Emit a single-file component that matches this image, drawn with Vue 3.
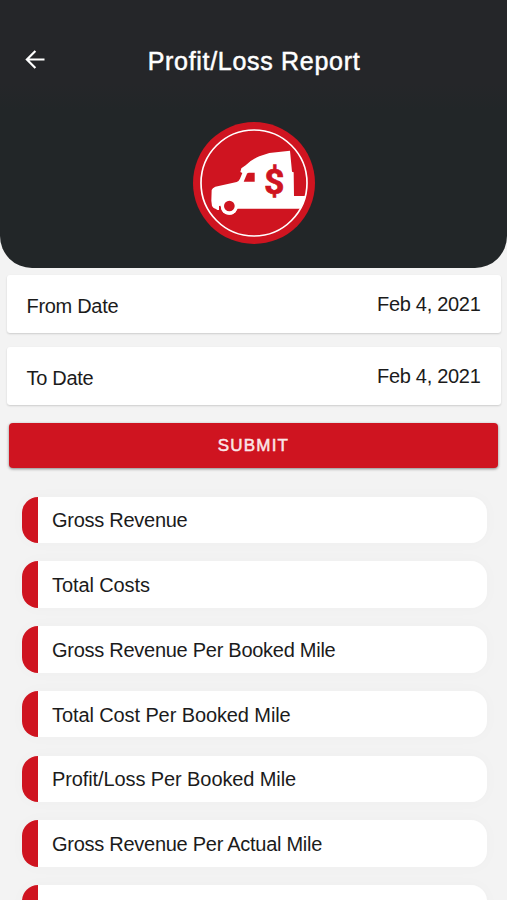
<template>
  <div class="page">
    <header class="hero">
      <div class="toolbar">
        <button class="back" aria-label="Back">
          <svg viewBox="0 0 20 20" width="20" height="20" fill="none" stroke="currentColor" stroke-width="2.2">
            <path d="M19.5 9.5H1.9M10.4 1L1.9 9.5l8.5 8.5"/>
          </svg>
        </button>
        <h1 class="title">Profit/Loss Report</h1>
      </div>
      <svg class="logo" viewBox="39 36 366 366">
        <circle cx="222" cy="219" r="183" fill="#cf1420"/>
        <circle cx="222" cy="219" r="159" fill="none" stroke="#fff" stroke-width="5"/>
        <path fill="#fff" d="M95 240Q97 234 106 230L170 216Q177 213 180 206L187 189L181 186L184 175L197 166Q215 148 238 139L268 129L330 122L336 185L341 187L342 258H377Q372 277 362 296H172Q164 314 148 314Q132 314 125 301L122 287L117 288V300H112L108 297Q100 296 96 288L94 272Z"/>
        <path fill="#cf1420" d="M201 191Q203 188 207 188H224V215H191Z"/>
        <circle cx="148" cy="288" r="26" fill="#fff"/>
        <circle cx="148" cy="288" r="16" fill="#cf1420"/>
        <text class="dollar" x="283" y="251" text-anchor="middle">$</text>
      </svg>
    </header>

    <div class="filters">
      <div class="date-row" v-for="d in dates" :key="d.label">
        <span class="date-label">{{ d.label }}</span>
        <span class="date-value">{{ d.value }}</span>
      </div>
      <button class="submit">SUBMIT</button>
    </div>

    <ul class="report">
      <li
        class="report-item"
        v-for="(item, i) in items"
        :key="i"
        :class="{ tight: item.startsWith('Gross') }"
      >{{ item }}</li>
    </ul>
  </div>
</template>

<script setup>
const dates = [
  { label: 'From Date', value: 'Feb 4, 2021' },
  { label: 'To Date', value: 'Feb 4, 2021' }
]

const items = [
  'Gross Revenue',
  'Total Costs',
  'Gross Revenue Per Booked Mile',
  'Total Cost Per Booked Mile',
  'Profit/Loss Per Booked Mile',
  'Gross Revenue Per Actual Mile',
  ''
]
</script>

<style>
body {
  margin: 0;
  background: #f3f3f3;
}
</style>

<style scoped>
.page {
  height: 900px;
  overflow: hidden;
  background: #f3f3f3;
  color: #1b1b1b;
  font-family: "Liberation Sans", Arial, sans-serif;
}

.hero {
  height: 268px;
  display: flex;
  flex-direction: column;
  align-items: center;
  background: linear-gradient(#252629 84px, #222628 110px);
  border-radius: 0 0 32px 32px;
}

.toolbar {
  width: 100%;
  height: 122px;
  box-sizing: border-box;
  padding: 0 25px;
  display: grid;
  grid-template-columns: 20px 1fr 20px;
  align-items: center;
}

.back {
  display: flex;
  padding: 0;
  border: 0;
  background: none;
  color: #fff;
  cursor: pointer;
}

.back svg {
  margin-top: -2px;
}

.title {
  margin: 0;
  padding-left: 1px;
  text-align: center;
  color: #fff;
  font-size: 25px;
  font-weight: 400;
  letter-spacing: 0.7px;
  -webkit-text-stroke: 0.5px #fff;
}

.logo {
  width: 122px;
  height: 122px;
}

.dollar {
  fill: #cf1420;
  stroke: #cf1420;
  stroke-width: 2px;
  font-family: Roboto, sans-serif;
  font-size: 107px;
  font-weight: 700;
}

.filters {
  padding: 7px 6px 0 7px;
}

.date-row {
  height: 58px;
  margin-bottom: 14px;
  padding: 0 20.5px 0 19.5px;
  display: flex;
  align-items: center;
  justify-content: space-between;
  background: #fff;
  border-radius: 3px;
  box-shadow: 0 1px 2px rgba(0, 0, 0, 0.16);
  font-size: 20px;
  letter-spacing: -0.3px;
}

.date-label {
  padding-top: 4px;
}

.submit {
  display: block;
  width: calc(100% - 5px);
  height: 44.5px;
  margin: 18px 3px 0 2px;
  padding: 1px 0 0;
  border: 0;
  border-radius: 4px;
  background: #cf1420;
  color: #fbe6e7;
  font-family: "Liberation Sans", Arial, sans-serif;
  font-size: 17px;
  font-weight: 400;
  letter-spacing: 1.2px;
  -webkit-text-stroke: 0.5px #fbe6e7;
  box-shadow: 0 1px 3px rgba(0, 0, 0, 0.45);
  cursor: pointer;
}

.report {
  list-style: none;
  margin: 0;
  padding: 29px 20.5px 0 22px;
  display: flex;
  flex-direction: column;
  gap: 18.25px;
}

.report-item {
  flex: none;
  box-sizing: border-box;
  height: 46.5px;
  padding: 2px 0 0 30px;
  display: flex;
  align-items: center;
  border-radius: 16px;
  background: linear-gradient(90deg, #cf1420 16px, #fff 16px);
  box-shadow: 0 0 16px rgba(0, 0, 0, 0.025);
  font-size: 20px;
  letter-spacing: -0.1px;
}

.report-item.tight {
  letter-spacing: -0.27px;
}
</style>
